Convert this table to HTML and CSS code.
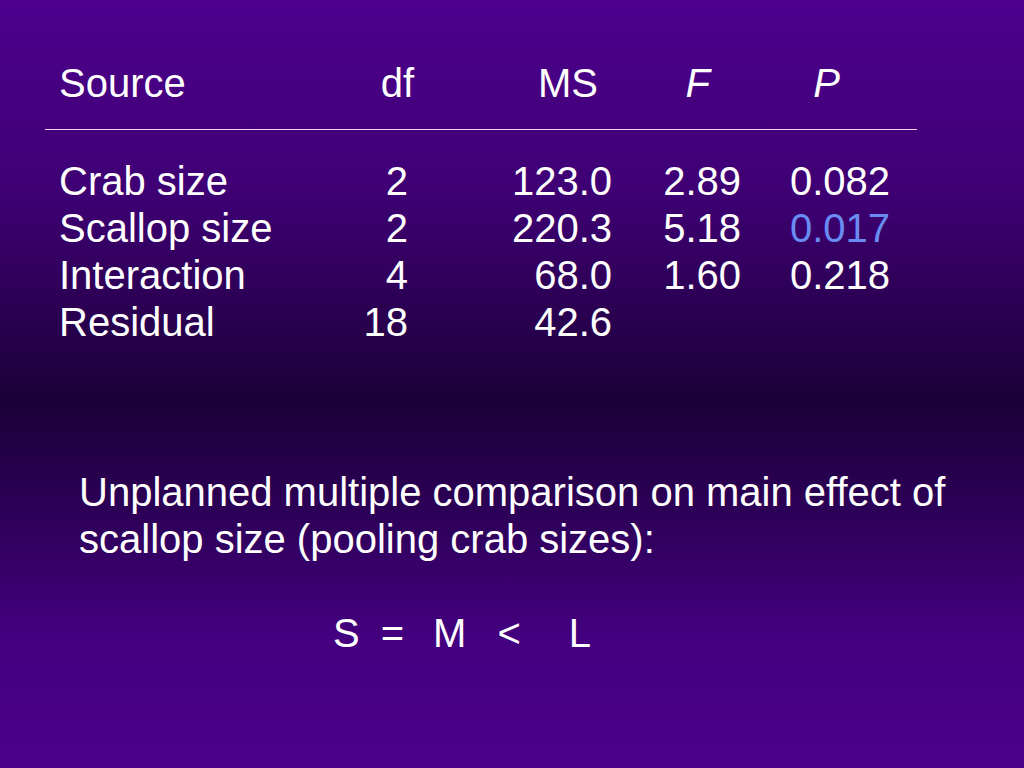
FILE: index.html
```html
<!DOCTYPE html>
<html>
<head>
<meta charset="utf-8">
<link rel="stylesheet" href="styles.css">
</head>
<body>
<div class="slide">
  <div class="table">
    <div class="row head">
      <span class="c-src">Source</span>
      <span class="c-df">df</span>
      <span class="c-ms">MS</span>
      <span class="c-f"><i>F</i></span>
      <span class="c-p"><i>P</i></span>
    </div>
    <div class="rule"></div>
    <div class="body">
      <div class="row">
        <span class="c-src">Crab size</span>
        <span class="c-df">2</span>
        <span class="c-ms">123.0</span>
        <span class="c-f">2.89</span>
        <span class="c-p">0.082</span>
      </div>
      <div class="row">
        <span class="c-src">Scallop size</span>
        <span class="c-df">2</span>
        <span class="c-ms">220.3</span>
        <span class="c-f">5.18</span>
        <span class="c-p sig">0.017</span>
      </div>
      <div class="row">
        <span class="c-src">Interaction</span>
        <span class="c-df">4</span>
        <span class="c-ms">68.0</span>
        <span class="c-f">1.60</span>
        <span class="c-p">0.218</span>
      </div>
      <div class="row">
        <span class="c-src">Residual</span>
        <span class="c-df">18</span>
        <span class="c-ms">42.6</span>
        <span class="c-f"></span>
        <span class="c-p"></span>
      </div>
    </div>
  </div>
  <p class="note">Unplanned multiple comparison on main effect of<br>scallop size (pooling crab sizes):</p>
  <div class="result">
    <span class="r-s">S</span>
    <span class="r-eq">=</span>
    <span class="r-m">M</span>
    <span class="r-lt">&lt;</span>
    <span class="r-l">L</span>
  </div>
</div>
</body>
</html>
```

FILE: styles.css
```css
html, body {
  margin: 0;
  padding: 0;
}
body {
  width: 1024px;
  height: 768px;
  overflow: hidden;
  background: linear-gradient(to bottom,
    #4e008e 0px,
    #3d0072 200px,
    #1c0038 400px,
    #2e005a 520px,
    #440080 640px,
    #4d008c 768px);
  font-family: "Liberation Sans", Arial, sans-serif;
  color: #ffffff;
  font-size: 40px;
  line-height: 47px;
}
.slide {
  padding-top: 60px;
}
.table {
  display: flex;
  flex-direction: column;
}
.row {
  display: grid;
  grid-template-columns: 290px 59px 204px 129px 149px;
  padding-left: 59px;
}
.row > span {
  text-align: right;
  white-space: nowrap;
}
.row > .c-src {
  text-align: left;
}
.head .c-df { margin-right: -6px; }
.head .c-ms { padding-right: 14px; }
.head .c-f  { padding-right: 31px; }
.head .c-p  { padding-right: 50px; }
.head i {
  font-style: italic;
}
.rule {
  margin: 22px 0 0 45px;
  width: 872px;
  height: 1px;
  background: #f2d4f4;
}
.body {
  margin-top: 28px;
}
.sig {
  color: #6a8cf2;
}
.note {
  margin: 123px 0 0 0;
  padding-left: 79px;
}
.result {
  display: flex;
  margin-top: 47px;
  padding-left: 333px;
}
.r-eq { margin-left: 21px; }
.r-m  { margin-left: 29px; }
.r-lt { margin-left: 31px; }
.r-l  { margin-left: 48px; }
```
